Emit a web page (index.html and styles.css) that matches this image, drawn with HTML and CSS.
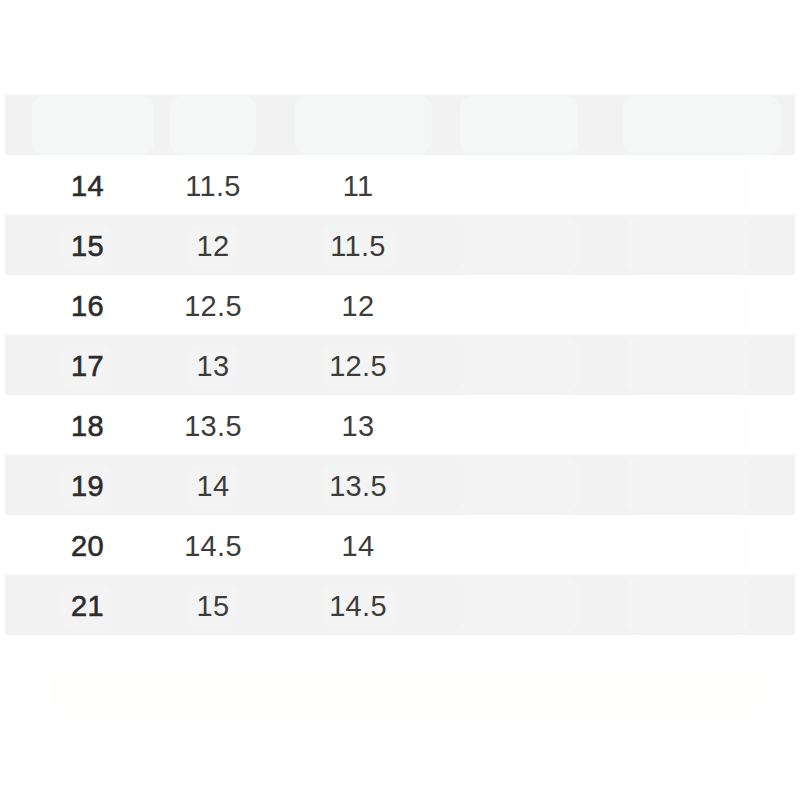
FILE: index.html
```html
<!DOCTYPE html>
<html lang="zh">
<head>
<meta charset="utf-8">
<title>尺码表</title>
<link rel="stylesheet" href="styles.css">
</head>
<body>
<div class="page">
  <div class="table">
    <div class="row head">
      <div class="cell"><span class="ghost g1"></span></div>
      <div class="cell"><span class="ghost g2"></span></div>
      <div class="cell"><span class="ghost g3"></span></div>
      <div class="cell"><span class="ghost g4"></span></div>
      <div class="cell"><span class="ghost g5"></span></div>
    </div>
    <div class="row">
      <div class="cell"><span class="val key">14</span></div>
      <div class="cell"><span class="val">11.5</span></div>
      <div class="cell"><span class="val">11</span></div>
      <div class="cell"><span class="blank"></span></div>
      <div class="cell"><span class="blank"></span></div>
    </div>
    <div class="row alt">
      <div class="cell"><span class="val key">15</span></div>
      <div class="cell"><span class="val">12</span></div>
      <div class="cell"><span class="val">11.5</span></div>
      <div class="cell"><span class="blank"></span></div>
      <div class="cell"><span class="blank"></span></div>
    </div>
    <div class="row">
      <div class="cell"><span class="val key">16</span></div>
      <div class="cell"><span class="val">12.5</span></div>
      <div class="cell"><span class="val">12</span></div>
      <div class="cell"><span class="blank"></span></div>
      <div class="cell"><span class="blank"></span></div>
    </div>
    <div class="row alt">
      <div class="cell"><span class="val key">17</span></div>
      <div class="cell"><span class="val">13</span></div>
      <div class="cell"><span class="val">12.5</span></div>
      <div class="cell"><span class="blank"></span></div>
      <div class="cell"><span class="blank"></span></div>
    </div>
    <div class="row">
      <div class="cell"><span class="val key">18</span></div>
      <div class="cell"><span class="val">13.5</span></div>
      <div class="cell"><span class="val">13</span></div>
      <div class="cell"><span class="blank"></span></div>
      <div class="cell"><span class="blank"></span></div>
    </div>
    <div class="row alt">
      <div class="cell"><span class="val key">19</span></div>
      <div class="cell"><span class="val">14</span></div>
      <div class="cell"><span class="val">13.5</span></div>
      <div class="cell"><span class="blank"></span></div>
      <div class="cell"><span class="blank"></span></div>
    </div>
    <div class="row">
      <div class="cell"><span class="val key">20</span></div>
      <div class="cell"><span class="val">14.5</span></div>
      <div class="cell"><span class="val">14</span></div>
      <div class="cell"><span class="blank"></span></div>
      <div class="cell"><span class="blank"></span></div>
    </div>
    <div class="row alt">
      <div class="cell"><span class="val key">21</span></div>
      <div class="cell"><span class="val">15</span></div>
      <div class="cell"><span class="val">14.5</span></div>
      <div class="cell"><span class="blank"></span></div>
      <div class="cell"><span class="blank"></span></div>
    </div>
  </div>
  <div class="note"></div>
</div>
</body>
</html>
```

FILE: styles.css
```css
* { box-sizing: border-box; }

html, body {
  margin: 0;
  padding: 0;
  background: #ffffff;
}

body {
  font-family: "Liberation Sans", Arial, sans-serif;
  color: #333333;
}

.page {
  width: 800px;
  height: 800px;
  padding: 95px 5px 0 5px;
}

.table {
  display: flex;
  flex-direction: column;
  width: 790px;
}

.row {
  display: grid;
  grid-template-columns: 165px 86px 204px 118px 217px;
  height: 60px;
  background: #ffffff;
}

.row.alt,
.row.head {
  background: #f2f2f2;
}

.cell {
  display: flex;
  align-items: center;
  justify-content: center;
}

.val {
  font-size: 29px;
  line-height: 40px;
  padding: 1px 8px 0;
  border-radius: 8px;
  color: #3c3c3c;
  letter-spacing: 0.3px;
}

.row.alt .val {
  background: #f4f4f4;
}

.val.key {
  color: #2c2c2c;
  -webkit-text-stroke: 0.6px #2c2c2c;
}

.blank {
  display: block;
  width: 124px;
  height: 56px;
  border-radius: 12px;
  background: #fefefe;
}

.row.alt .blank {
  background: #f4f4f4;
}

.ghost {
  display: block;
  height: 58px;
  border-radius: 12px;
  background: #f5f6f6;
}

.g1 { width: 122px; margin-left: 10px; }
.g2 { width: 130px; margin-left: 0; }
.g3 { width: 136px; margin-left: 10px; }
.g4 { width: 160px; margin-left: 0; }
.g5 { width: 158px; margin-left: 30px; }

.note {
  margin: 37px 0 0 45px;
  width: 712px;
  height: 40px;
  border-radius: 12px;
  background: #fefefc;
}
```
